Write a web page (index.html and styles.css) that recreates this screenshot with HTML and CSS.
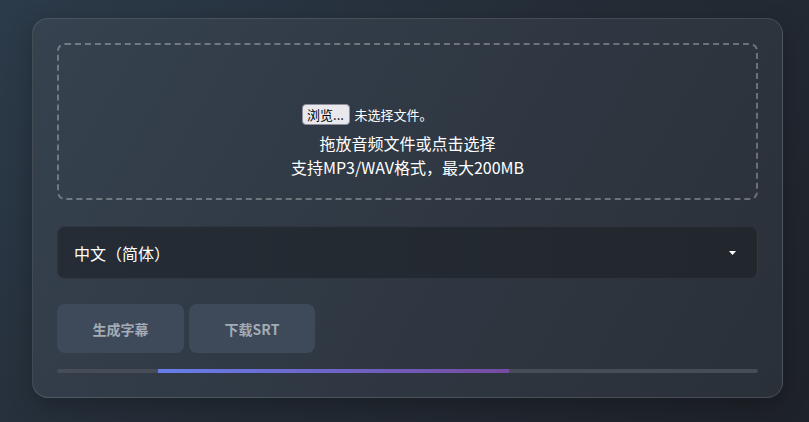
FILE: index.html
```html
<!DOCTYPE html>
<html lang="zh-CN">
<head>
<meta charset="utf-8">
<title>字幕生成</title>
<link rel="stylesheet" href="styles.css">
</head>
<body>
<div class="card">
  <div class="drop">
    <div class="file-row">
      <span class="file-btn">浏览...</span>
      <span class="file-name">未选择文件。</span>
    </div>
    <div class="hint">
      <div>拖放音频文件或点击选择</div>
      <div>支持MP3/WAV格式，最大200MB</div>
    </div>
  </div>
  <div class="select">
    <span>中文（简体）</span>
    <svg class="caret" width="7" height="4" viewBox="0 0 7 4"><path d="M0 0H7L3.5 4Z" fill="#fff"/></svg>
  </div>
  <div class="actions">
    <button class="btn btn-gen">生成字幕</button>
    <button class="btn btn-dl">下载SRT</button>
  </div>
  <div class="track"><div class="fill" style="margin-left:101px;width:351px"></div></div>
</div>
</body>
</html>
```
FILE: styles.css
```css
html, body { height: 100%; }
body {
  margin: 0;
  padding: 18px 0 0 32px;
  box-sizing: border-box;
  background: linear-gradient(135deg, #2c3b4a 0%, #242c36 50%, #1e2229 100%);
  font-family: "Noto Sans CJK SC", "Noto Sans", sans-serif;
  color: #fff;
}
.card {
  width: 751px;
  box-sizing: border-box;
  padding: 24px;
  border: 1px solid rgba(255,255,255,0.12);
  border-radius: 16px;
  background: linear-gradient(120deg, #36424f 0%, #2f3843 50%, #2a3038 100%);
  box-shadow: 0 8px 24px rgba(0,0,0,0.25);
}
.drop {
  height: 157px;
  box-sizing: border-box;
  border: 2px dashed rgba(255,255,255,0.3);
  border-radius: 8px;
  padding-top: 59px;
  display: flex;
  flex-direction: column;
  align-items: center;
}
.file-row {
  display: flex;
  align-items: center;
  gap: 5px;
  width: 214px;
  height: 21px;
  margin-left: 2px;
}
.file-btn {
  display: flex;
  align-items: center;
  justify-content: center;
  box-sizing: border-box;
  width: 48px;
  height: 21px;
  background: #e9e9ed;
  border: 1px solid #8f8f9d;
  border-radius: 4px;
  color: #000;
  font-size: 13px;
}
.file-name { font-size: 13px; color: #fff; }
.hint {
  margin-top: 7px;
  font-size: 16px;
  line-height: 23.5px;
  text-align: center;
  color: #fff;
}
.select {
  margin-top: 26px;
  height: 53px;
  box-sizing: border-box;
  padding: 0 21px 0 16px;
  background: linear-gradient(90deg, #252c35 0%, #22272d 100%);
  border: 1px solid rgba(255,255,255,0.06);
  border-radius: 8px;
  display: flex;
  align-items: center;
  justify-content: space-between;
  font-size: 16px;
  font-weight: 400;
}
.caret { margin-top: 1px; }
.actions {
  margin-top: 25px;
  display: flex;
  gap: 5px;
}
.btn {
  height: 49px;
  border: none;
  border-radius: 8px;
  background: #3e4a59;
  color: #a3abb5;
  font-family: "Noto Sans CJK SC", "Noto Sans", sans-serif;
  font-size: 14px;
  font-weight: 700;
  padding: 0;
}
.btn-gen { width: 127px; }
.btn-dl { width: 126px; }
.track {
  margin-top: 16px;
  height: 4px;
  background: #464d57;
  border-radius: 2px;
  display: flex;
}
.fill {
  height: 4px;
  background: linear-gradient(90deg, #667eea, #764ba2);
}
```
